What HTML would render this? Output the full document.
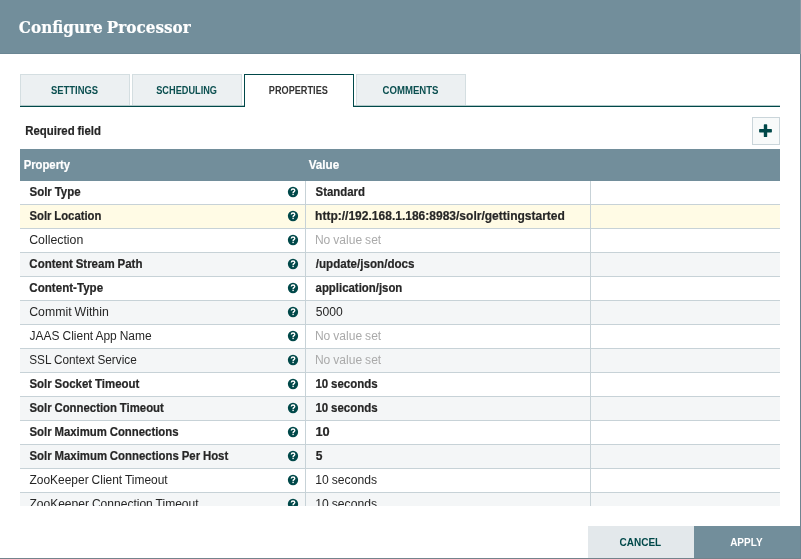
<!DOCTYPE html>
<html><head><meta charset="utf-8"><title>Configure Processor</title>
<style>
html,body{margin:0;padding:0;}
body{width:801px;height:559px;overflow:hidden;background:#74838c;position:relative;font-family:'Liberation Sans', sans-serif;}
#dlg{position:absolute;left:0;top:0;width:800px;height:558px;background:#fff;overflow:hidden;}
#hdr{position:absolute;left:0;top:0;width:800px;height:54px;background:#728e9b;}
.t{position:absolute;white-space:nowrap;line-height:20px;height:20px;transform-origin:0 50%;}
#txt{position:absolute;left:0;top:0;width:800px;height:558px;will-change:transform;}
#rowtxt{position:absolute;left:0;top:181px;width:800px;height:325px;overflow:hidden;will-change:transform;}
.tab{position:absolute;top:74px;width:108px;height:30px;border:1px solid #d4dee1;border-bottom:none;background:#ecf0f2;}
.tab.sel{background:#fff;border-color:#004849;height:32px;}
#tabline2{position:absolute;left:20px;top:105px;width:760px;height:1px;background:#004849;opacity:.3;}
#tabline{position:absolute;left:20px;top:106px;width:760px;height:1px;background:#004849;}
#plus{position:absolute;left:752px;top:117px;width:26px;height:26px;border:1px solid #cad5da;background:#f8fafa;}
#thead{position:absolute;left:20px;top:149px;width:760px;height:32px;background:#728e9b;}
#rows{position:absolute;left:0;top:181px;width:800px;height:325px;overflow:hidden;}
.row{position:absolute;left:20px;width:760px;height:23px;border-bottom:1px solid #c7d2d7;}
.row i{position:absolute;top:0;width:1px;height:24px;background:#c7d2d7;}
.c1{left:285px} .c2{left:570px}
.q{position:absolute;left:266.6px;top:4.5px;width:12px;height:12px;}
#cancel{position:absolute;left:588px;top:526px;width:106px;height:32px;background:#e3e8eb;}
#apply{position:absolute;left:694px;top:526px;width:106px;height:32px;background:#728e9b;}
</style></head><body>
<div style="position:absolute;left:800px;top:0;width:1px;height:54px;background:#8a9aa4"></div><div style="position:absolute;left:800px;top:54px;width:1px;height:505px;background:#6f8490"></div>
<div id="dlg">
<div id="hdr"></div><div style="position:absolute;left:0;top:53px;width:800px;height:1px;background:#6a8693"></div>
<div class="tab" style="left:20px"></div>
<div class="tab" style="left:132px"></div>
<div class="tab" style="left:356px"></div>
<div id="tabline2"></div><div id="tabline"></div>
<div class="tab sel" style="left:244px"></div>
<div id="plus"><svg width="28" height="28" viewBox="0 0 28 28" style="position:absolute;left:-1px;top:-1px"><rect x="7.1" y="12" width="12.8" height="3.4" rx=".7" fill="#004849"/><rect x="11.8" y="7.3" width="3.4" height="12.8" rx=".7" fill="#004849"/></svg></div>
<div id="thead"></div>
<div id="cancel"></div><div id="apply"></div>
<div id="rows">
<div class="row" style="top:0px;background:#fff"><i class="c1"></i><i class="c2"></i><svg class="q" viewBox="0 0 12 12"><circle cx="6" cy="6" r="5.15" fill="#004849"/><path d="M4.3 4.6 C4.3 3.5 5.1 3 6 3 C7 3 7.8 3.6 7.8 4.5 C7.8 5.6 6.1 5.7 6.1 6.9" fill="none" stroke="#fff" stroke-width="1.35"/><rect x="5.4" y="7.7" width="1.4" height="1.4" fill="#fff"/></svg></div>
<div class="row" style="top:24px;background:#fffbe5"><i class="c1"></i><i class="c2"></i><svg class="q" viewBox="0 0 12 12"><circle cx="6" cy="6" r="5.15" fill="#004849"/><path d="M4.3 4.6 C4.3 3.5 5.1 3 6 3 C7 3 7.8 3.6 7.8 4.5 C7.8 5.6 6.1 5.7 6.1 6.9" fill="none" stroke="#fff" stroke-width="1.35"/><rect x="5.4" y="7.7" width="1.4" height="1.4" fill="#fff"/></svg></div>
<div class="row" style="top:48px;background:#fff"><i class="c1"></i><i class="c2"></i><svg class="q" viewBox="0 0 12 12"><circle cx="6" cy="6" r="5.15" fill="#004849"/><path d="M4.3 4.6 C4.3 3.5 5.1 3 6 3 C7 3 7.8 3.6 7.8 4.5 C7.8 5.6 6.1 5.7 6.1 6.9" fill="none" stroke="#fff" stroke-width="1.35"/><rect x="5.4" y="7.7" width="1.4" height="1.4" fill="#fff"/></svg></div>
<div class="row" style="top:72px;background:#f4f6f7"><i class="c1"></i><i class="c2"></i><svg class="q" viewBox="0 0 12 12"><circle cx="6" cy="6" r="5.15" fill="#004849"/><path d="M4.3 4.6 C4.3 3.5 5.1 3 6 3 C7 3 7.8 3.6 7.8 4.5 C7.8 5.6 6.1 5.7 6.1 6.9" fill="none" stroke="#fff" stroke-width="1.35"/><rect x="5.4" y="7.7" width="1.4" height="1.4" fill="#fff"/></svg></div>
<div class="row" style="top:96px;background:#fff"><i class="c1"></i><i class="c2"></i><svg class="q" viewBox="0 0 12 12"><circle cx="6" cy="6" r="5.15" fill="#004849"/><path d="M4.3 4.6 C4.3 3.5 5.1 3 6 3 C7 3 7.8 3.6 7.8 4.5 C7.8 5.6 6.1 5.7 6.1 6.9" fill="none" stroke="#fff" stroke-width="1.35"/><rect x="5.4" y="7.7" width="1.4" height="1.4" fill="#fff"/></svg></div>
<div class="row" style="top:120px;background:#f4f6f7"><i class="c1"></i><i class="c2"></i><svg class="q" viewBox="0 0 12 12"><circle cx="6" cy="6" r="5.15" fill="#004849"/><path d="M4.3 4.6 C4.3 3.5 5.1 3 6 3 C7 3 7.8 3.6 7.8 4.5 C7.8 5.6 6.1 5.7 6.1 6.9" fill="none" stroke="#fff" stroke-width="1.35"/><rect x="5.4" y="7.7" width="1.4" height="1.4" fill="#fff"/></svg></div>
<div class="row" style="top:144px;background:#fff"><i class="c1"></i><i class="c2"></i><svg class="q" viewBox="0 0 12 12"><circle cx="6" cy="6" r="5.15" fill="#004849"/><path d="M4.3 4.6 C4.3 3.5 5.1 3 6 3 C7 3 7.8 3.6 7.8 4.5 C7.8 5.6 6.1 5.7 6.1 6.9" fill="none" stroke="#fff" stroke-width="1.35"/><rect x="5.4" y="7.7" width="1.4" height="1.4" fill="#fff"/></svg></div>
<div class="row" style="top:168px;background:#f4f6f7"><i class="c1"></i><i class="c2"></i><svg class="q" viewBox="0 0 12 12"><circle cx="6" cy="6" r="5.15" fill="#004849"/><path d="M4.3 4.6 C4.3 3.5 5.1 3 6 3 C7 3 7.8 3.6 7.8 4.5 C7.8 5.6 6.1 5.7 6.1 6.9" fill="none" stroke="#fff" stroke-width="1.35"/><rect x="5.4" y="7.7" width="1.4" height="1.4" fill="#fff"/></svg></div>
<div class="row" style="top:192px;background:#fff"><i class="c1"></i><i class="c2"></i><svg class="q" viewBox="0 0 12 12"><circle cx="6" cy="6" r="5.15" fill="#004849"/><path d="M4.3 4.6 C4.3 3.5 5.1 3 6 3 C7 3 7.8 3.6 7.8 4.5 C7.8 5.6 6.1 5.7 6.1 6.9" fill="none" stroke="#fff" stroke-width="1.35"/><rect x="5.4" y="7.7" width="1.4" height="1.4" fill="#fff"/></svg></div>
<div class="row" style="top:216px;background:#f4f6f7"><i class="c1"></i><i class="c2"></i><svg class="q" viewBox="0 0 12 12"><circle cx="6" cy="6" r="5.15" fill="#004849"/><path d="M4.3 4.6 C4.3 3.5 5.1 3 6 3 C7 3 7.8 3.6 7.8 4.5 C7.8 5.6 6.1 5.7 6.1 6.9" fill="none" stroke="#fff" stroke-width="1.35"/><rect x="5.4" y="7.7" width="1.4" height="1.4" fill="#fff"/></svg></div>
<div class="row" style="top:240px;background:#fff"><i class="c1"></i><i class="c2"></i><svg class="q" viewBox="0 0 12 12"><circle cx="6" cy="6" r="5.15" fill="#004849"/><path d="M4.3 4.6 C4.3 3.5 5.1 3 6 3 C7 3 7.8 3.6 7.8 4.5 C7.8 5.6 6.1 5.7 6.1 6.9" fill="none" stroke="#fff" stroke-width="1.35"/><rect x="5.4" y="7.7" width="1.4" height="1.4" fill="#fff"/></svg></div>
<div class="row" style="top:264px;background:#f4f6f7"><i class="c1"></i><i class="c2"></i><svg class="q" viewBox="0 0 12 12"><circle cx="6" cy="6" r="5.15" fill="#004849"/><path d="M4.3 4.6 C4.3 3.5 5.1 3 6 3 C7 3 7.8 3.6 7.8 4.5 C7.8 5.6 6.1 5.7 6.1 6.9" fill="none" stroke="#fff" stroke-width="1.35"/><rect x="5.4" y="7.7" width="1.4" height="1.4" fill="#fff"/></svg></div>
<div class="row" style="top:288px;background:#fff"><i class="c1"></i><i class="c2"></i><svg class="q" viewBox="0 0 12 12"><circle cx="6" cy="6" r="5.15" fill="#004849"/><path d="M4.3 4.6 C4.3 3.5 5.1 3 6 3 C7 3 7.8 3.6 7.8 4.5 C7.8 5.6 6.1 5.7 6.1 6.9" fill="none" stroke="#fff" stroke-width="1.35"/><rect x="5.4" y="7.7" width="1.4" height="1.4" fill="#fff"/></svg></div>
<div class="row" style="top:312px;background:#f4f6f7"><i class="c1"></i><i class="c2"></i><svg class="q" viewBox="0 0 12 12"><circle cx="6" cy="6" r="5.15" fill="#004849"/><path d="M4.3 4.6 C4.3 3.5 5.1 3 6 3 C7 3 7.8 3.6 7.8 4.5 C7.8 5.6 6.1 5.7 6.1 6.9" fill="none" stroke="#fff" stroke-width="1.35"/><rect x="5.4" y="7.7" width="1.4" height="1.4" fill="#fff"/></svg></div>
</div>
<div id="txt">
<span class="t " style="left:18px;top:16.55px;font-size:17.5px;font-weight:700;color:#fff;font-family:'DejaVu Serif Condensed', 'DejaVu Serif', 'Liberation Serif', serif;word-spacing:-1.20px;-webkit-text-stroke:0.18px #fff;transform:translate(0.86px,0.00px) scaleX(0.9670)">Configure Processor</span>
<span class="t " style="left:50px;top:81.23px;font-size:10px;font-weight:700;color:#0b4f50;font-family:'Liberation Sans', sans-serif;word-spacing:-0.30px;transform:translate(0.93px,0.20px) scaleX(0.9425)">SETTINGS</span>
<span class="t " style="left:156px;top:81.23px;font-size:10px;font-weight:700;color:#0b4f50;font-family:'Liberation Sans', sans-serif;word-spacing:-0.30px;transform:translate(0.24px,0.20px) scaleX(0.9185)">SCHEDULING</span>
<span class="t " style="left:268px;top:81.23px;font-size:10px;font-weight:700;color:#333;font-family:'Liberation Sans', sans-serif;word-spacing:-0.30px;transform:translate(0.79px,0.20px) scaleX(0.9163)">PROPERTIES</span>
<span class="t " style="left:382px;top:81.23px;font-size:10px;font-weight:700;color:#0b4f50;font-family:'Liberation Sans', sans-serif;word-spacing:-0.30px;transform:translate(0.51px,0.20px) scaleX(0.9593)">COMMENTS</span>
<span class="t " style="left:25px;top:120.64px;font-size:12px;font-weight:700;color:#262626;font-family:'Liberation Sans', sans-serif;word-spacing:-0.36px;-webkit-text-stroke:0.2px #262626;transform:translate(0.24px,0.30px) scaleX(0.9505)">Required field</span>
<span class="t " style="left:23px;top:154.84px;font-size:12px;font-weight:700;color:#fff;font-family:'Liberation Sans', sans-serif;word-spacing:-0.36px;-webkit-text-stroke:0.2px #fff;transform:translate(0.65px,0.30px) scaleX(0.9404)">Property</span>
<span class="t " style="left:308px;top:154.84px;font-size:12px;font-weight:700;color:#fff;font-family:'Liberation Sans', sans-serif;word-spacing:-0.36px;-webkit-text-stroke:0.2px #fff;transform:translate(0.72px,0.30px) scaleX(0.9719)">Value</span>
<span class="t " style="left:619px;top:531.99px;font-size:11px;font-weight:700;color:#004849;font-family:'Liberation Sans', sans-serif;word-spacing:-0.33px;transform:translate(0.59px,0.00px) scaleX(0.9078)">CANCEL</span>
<span class="t " style="left:730px;top:531.99px;font-size:11px;font-weight:700;color:#fff;font-family:'Liberation Sans', sans-serif;word-spacing:-0.33px;transform:translate(0.15px,0.00px) scaleX(0.9086)">APPLY</span>
</div>
<div id="rowtxt">
<span class="t " style="left:29px;top:0.74px;font-size:12px;font-weight:700;color:#262626;font-family:'Liberation Sans', sans-serif;word-spacing:-0.36px;-webkit-text-stroke:0.2px #262626;transform:translate(0.47px,0.00px) scaleX(0.9567)">Solr Type</span>
<span class="t " style="left:315px;top:0.74px;font-size:12px;font-weight:700;color:#262626;font-family:'Liberation Sans', sans-serif;word-spacing:-0.36px;-webkit-text-stroke:0.2px #262626;transform:translate(0.57px,0.00px) scaleX(0.9493)">Standard</span>
<span class="t " style="left:29px;top:24.74px;font-size:12px;font-weight:700;color:#262626;font-family:'Liberation Sans', sans-serif;word-spacing:-0.36px;-webkit-text-stroke:0.2px #262626;transform:translate(0.47px,0.00px) scaleX(0.9425)">Solr Location</span>
<span class="t " style="left:315px;top:24.74px;font-size:12px;font-weight:700;color:#262626;font-family:'Liberation Sans', sans-serif;word-spacing:-0.36px;-webkit-text-stroke:0.2px #262626;transform:translate(0.06px,0.00px) scaleX(1.0016)">http://192.168.1.186:8983/solr/gettingstarted</span>
<span class="t " style="left:29px;top:48.74px;font-size:12px;font-weight:400;color:#262626;font-family:'Liberation Sans', sans-serif;word-spacing:-0.36px;transform:translate(0.17px,0.00px) scaleX(1.0270)">Collection</span>
<span class="t " style="left:314px;top:48.74px;font-size:12px;font-weight:400;color:#aaaaaa;font-family:'Liberation Sans', sans-serif;word-spacing:-0.36px;transform:translate(0.91px,0.00px) scaleX(1.0044)">No value set</span>
<span class="t " style="left:29px;top:72.74px;font-size:12px;font-weight:700;color:#262626;font-family:'Liberation Sans', sans-serif;word-spacing:-0.36px;-webkit-text-stroke:0.2px #262626;transform:translate(0.33px,0.00px) scaleX(0.9586)">Content Stream Path</span>
<span class="t " style="left:315px;top:72.74px;font-size:12px;font-weight:700;color:#262626;font-family:'Liberation Sans', sans-serif;word-spacing:-0.36px;-webkit-text-stroke:0.2px #262626;transform:translate(0.79px,0.00px) scaleX(0.9674)">/update/json/docs</span>
<span class="t " style="left:29px;top:96.74px;font-size:12px;font-weight:700;color:#262626;font-family:'Liberation Sans', sans-serif;word-spacing:-0.36px;-webkit-text-stroke:0.2px #262626;transform:translate(0.32px,0.00px) scaleX(0.9651)">Content-Type</span>
<span class="t " style="left:315px;top:96.74px;font-size:12px;font-weight:700;color:#262626;font-family:'Liberation Sans', sans-serif;word-spacing:-0.36px;-webkit-text-stroke:0.2px #262626;transform:translate(0.57px,0.00px) scaleX(0.9496)">application/json</span>
<span class="t " style="left:29px;top:120.74px;font-size:12px;font-weight:400;color:#262626;font-family:'Liberation Sans', sans-serif;word-spacing:-0.36px;transform:translate(0.18px,0.00px) scaleX(1.0253)">Commit Within</span>
<span class="t " style="left:315px;top:120.74px;font-size:12px;font-weight:400;color:#262626;font-family:'Liberation Sans', sans-serif;word-spacing:-0.36px;transform:translate(0.71px,0.00px) scaleX(1.0096)">5000</span>
<span class="t " style="left:29px;top:144.74px;font-size:12px;font-weight:400;color:#262626;font-family:'Liberation Sans', sans-serif;word-spacing:-0.36px;transform:translate(0.61px,0.00px) scaleX(0.9975)">JAAS Client App Name</span>
<span class="t " style="left:314px;top:144.74px;font-size:12px;font-weight:400;color:#aaaaaa;font-family:'Liberation Sans', sans-serif;word-spacing:-0.36px;transform:translate(0.91px,0.00px) scaleX(1.0044)">No value set</span>
<span class="t " style="left:29px;top:168.74px;font-size:12px;font-weight:400;color:#262626;font-family:'Liberation Sans', sans-serif;word-spacing:-0.36px;transform:translate(0.27px,0.00px) scaleX(0.9808)">SSL Context Service</span>
<span class="t " style="left:314px;top:168.74px;font-size:12px;font-weight:400;color:#aaaaaa;font-family:'Liberation Sans', sans-serif;word-spacing:-0.36px;transform:translate(0.91px,0.00px) scaleX(1.0044)">No value set</span>
<span class="t " style="left:29px;top:192.74px;font-size:12px;font-weight:700;color:#262626;font-family:'Liberation Sans', sans-serif;word-spacing:-0.36px;-webkit-text-stroke:0.2px #262626;transform:translate(0.47px,0.00px) scaleX(0.9546)">Solr Socket Timeout</span>
<span class="t " style="left:315px;top:192.74px;font-size:12px;font-weight:700;color:#262626;font-family:'Liberation Sans', sans-serif;word-spacing:-0.36px;-webkit-text-stroke:0.2px #262626;transform:translate(0.48px,0.00px) scaleX(0.9566)">10 seconds</span>
<span class="t " style="left:29px;top:216.74px;font-size:12px;font-weight:700;color:#262626;font-family:'Liberation Sans', sans-serif;word-spacing:-0.36px;-webkit-text-stroke:0.2px #262626;transform:translate(0.47px,0.00px) scaleX(0.9480)">Solr Connection Timeout</span>
<span class="t " style="left:315px;top:216.74px;font-size:12px;font-weight:700;color:#262626;font-family:'Liberation Sans', sans-serif;word-spacing:-0.36px;-webkit-text-stroke:0.2px #262626;transform:translate(0.48px,0.00px) scaleX(0.9566)">10 seconds</span>
<span class="t " style="left:29px;top:240.74px;font-size:12px;font-weight:700;color:#262626;font-family:'Liberation Sans', sans-serif;word-spacing:-0.36px;-webkit-text-stroke:0.2px #262626;transform:translate(0.47px,0.00px) scaleX(0.9478)">Solr Maximum Connections</span>
<span class="t " style="left:315px;top:240.74px;font-size:12px;font-weight:700;color:#262626;font-family:'Liberation Sans', sans-serif;word-spacing:-0.36px;-webkit-text-stroke:0.2px #262626;transform:translate(0.39px,0.00px) scaleX(1.0651)">10</span>
<span class="t " style="left:29px;top:264.74px;font-size:12px;font-weight:700;color:#262626;font-family:'Liberation Sans', sans-serif;word-spacing:-0.36px;-webkit-text-stroke:0.2px #262626;transform:translate(0.47px,0.00px) scaleX(0.9498)">Solr Maximum Connections Per Host</span>
<span class="t " style="left:315px;top:264.74px;font-size:12px;font-weight:700;color:#262626;font-family:'Liberation Sans', sans-serif;word-spacing:-0.36px;-webkit-text-stroke:0.2px #262626;transform:translate(0.83px,0.00px) scaleX(1.0026)">5</span>
<span class="t " style="left:29px;top:288.74px;font-size:12px;font-weight:400;color:#262626;font-family:'Liberation Sans', sans-serif;word-spacing:-0.36px;transform:translate(0.42px,0.00px) scaleX(0.9970)">ZooKeeper Client Timeout</span>
<span class="t " style="left:315px;top:288.74px;font-size:12px;font-weight:400;color:#262626;font-family:'Liberation Sans', sans-serif;word-spacing:-0.36px;transform:translate(0.27px,0.00px) scaleX(1.0120)">10 seconds</span>
<span class="t " style="left:29px;top:312.74px;font-size:12px;font-weight:400;color:#262626;font-family:'Liberation Sans', sans-serif;word-spacing:-0.36px;transform:translate(0.42px,0.00px) scaleX(1.0027)">ZooKeeper Connection Timeout</span>
<span class="t " style="left:315px;top:312.74px;font-size:12px;font-weight:400;color:#262626;font-family:'Liberation Sans', sans-serif;word-spacing:-0.36px;transform:translate(0.27px,0.00px) scaleX(1.0120)">10 seconds</span>
</div>
</div>
</body></html>
